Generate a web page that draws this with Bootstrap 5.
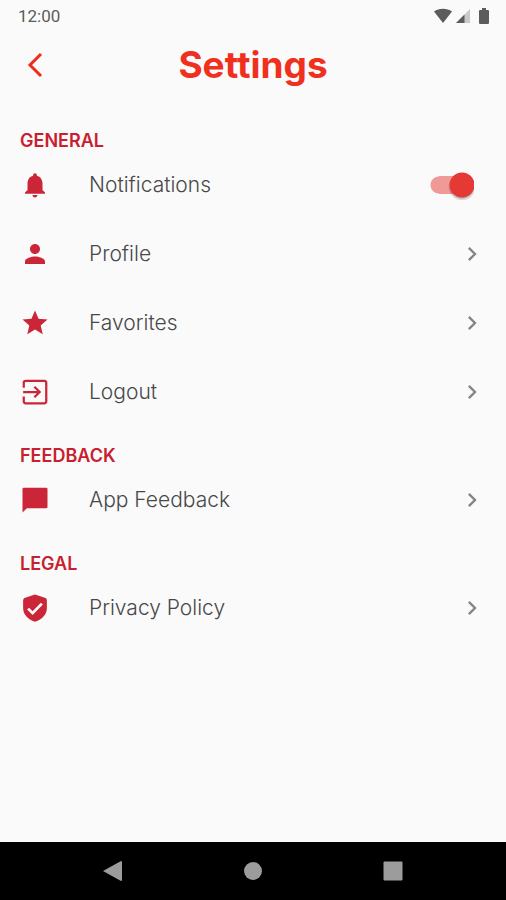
<!DOCTYPE html>
<html lang="en">
<head>
<meta charset="utf-8">
<meta name="viewport" content="width=device-width, initial-scale=1">
<title>Settings</title>
<link href="https://cdn.jsdelivr.net/npm/bootstrap@5.3.0/dist/css/bootstrap.min.css" rel="stylesheet">
<style>
  body { background: #fafafa; color: #484848; font-family: Inter, sans-serif; }
  svg { display: block; flex-shrink: 0; }
  .status-bar { height: 32px; padding: 0 16px 0 18px; color: #5c5c5c; font: 400 17px/32px Roboto, sans-serif; }
  .app-bar { height: 66px; margin-bottom: 13px; padding: 0 20px; }
  .app-bar-side { width: 30px; }
  .app-title { color: #f0301f; font-size: 37px; line-height: 44px; font-weight: 700; }
  .section-title { padding: 21px 20px 0; color: #c8202f; font-size: 18px; line-height: 18px; font-weight: 600; }
  .setting { height: 69px; padding: 0 20px; color: #484848; font-size: 21px; line-height: 28px; font-weight: 300; }
  .setting-icon { width: 30px; margin-right: 39px; color: #cb2638; }
  .setting-toggle { width: 44px; height: 30px; margin: 0 12px 0 0; appearance: none; cursor: pointer;
    background: radial-gradient(circle at 32px 15px, #e53935 12px, transparent 13px),
                radial-gradient(circle at 32px 17px, #0004 11px, transparent 14px),
                linear-gradient(#f09a98, #f09a98) 9px 6px / 24px 18px no-repeat,
                radial-gradient(circle at 9px 15px, #f09a98 8px, transparent 9px); }
  .setting-toggle:not(:checked) { transform: scaleX(-1); filter: grayscale(1); }
  .system-nav { height: 58px; padding: 0 43px; background: #000; color: #9c9c9c; }
</style>
</head>
<body>
<div class="d-flex flex-column min-vh-100">
  <div class="status-bar d-flex align-items-center justify-content-between">
    <span>12:00</span>
    <div class="d-flex align-items-center gap-1">
      <svg width="18" height="16" viewBox="0 0 18 16" fill="currentColor"><path d="M0 3.500C5-.2 13-.2 18 3.500L9 15z"/></svg>
      <svg width="14" height="16" viewBox="0 0 14 16"><path d="M14 1v14H0z" fill="#c9c9c9"/><path d="M8.500 6.500V15H0z" fill="#5c5c5c"/></svg>
      <svg class="ms-1" width="12" height="16" viewBox="0 0 12 16" fill="currentColor"><path d="M4 0h4v2h2q1 0 1 1v12q0 1-1 1H2q-1 0-1-1V3q0-1 1-1h2z"/></svg>
    </div>
  </div>

  <header class="app-bar d-flex align-items-center justify-content-between">
    <button type="button" class="app-bar-side btn p-0 border-0" aria-label="Back">
      <svg width="30" height="30" viewBox="0 0 30 30" fill="none" stroke="#ee2c1c" stroke-width="3"><path d="M21 4 10 15l11 11"/></svg>
    </button>
    <h1 class="app-title mb-0">Settings</h1>
    <span class="app-bar-side"></span>
  </header>

  <main class="flex-grow-1">
    <section>
      <h2 class="section-title mb-0">GENERAL</h2>
      <div class="setting d-flex align-items-center">
        <span class="setting-icon"><svg width="30" height="30" viewBox="0 0 24 24" fill="currentColor"><path d="M12 22c1.100 0 2-.9 2-2h-4c0 1.100.9 2 2 2zm6-6v-5c0-3.070-1.640-5.640-4.500-6.320V4c0-.83-.67-1.500-1.500-1.500s-1.500.67-1.500 1.500v.68C7.630 5.360 6 7.920 6 11v5l-2 2v1h16v-1l-2-2z"/></svg></span>
        <label class="flex-grow-1" for="notifications">Notifications</label>
        <input class="setting-toggle" type="checkbox" role="switch" id="notifications" checked>
      </div>
      <a href="#profile" class="setting d-flex align-items-center text-decoration-none">
        <span class="setting-icon"><svg width="30" height="30" viewBox="0 0 24 24" fill="currentColor"><path d="M12 12c2.210 0 4-1.790 4-4s-1.790-4-4-4-4 1.790-4 4 1.790 4 4 4zm0 2c-2.670 0-8 1.340-8 4v2h16v-2c0-2.660-5.330-4-8-4z"/></svg></span>
        <span class="flex-grow-1">Profile</span>
        <svg width="28" height="28" viewBox="0 0 24 24" fill="#858585"><path d="M8.590 16.590 13.170 12 8.590 7.410 10 6l6 6-6 6z"/></svg>
      </a>
      <a href="#favorites" class="setting d-flex align-items-center text-decoration-none">
        <span class="setting-icon"><svg width="30" height="30" viewBox="0 0 24 24" fill="currentColor"><path d="M12 17.270 18.180 21l-1.640-7.030L22 9.240l-7.190-.61L12 2 9.190 8.630 2 9.240l5.460 4.730L5.820 21z"/></svg></span>
        <span class="flex-grow-1">Favorites</span>
        <svg width="28" height="28" viewBox="0 0 24 24" fill="#858585"><path d="M8.590 16.590 13.170 12 8.590 7.410 10 6l6 6-6 6z"/></svg>
      </a>
      <a href="#logout" class="setting d-flex align-items-center text-decoration-none">
        <span class="setting-icon"><svg width="30" height="30" viewBox="0 0 24 24" fill="none" stroke="currentColor" stroke-width="1.800"><path d="M3 8.500V4.600Q3 3 4.600 3h14.800Q21 3 21 4.600v14.800q0 1.600-1.600 1.600H4.600Q3 21 3 19.400v-3.900M2.500 12h13M11.500 7.800l4.200 4.200-4.200 4.200"/></svg></span>
        <span class="flex-grow-1">Logout</span>
        <svg width="28" height="28" viewBox="0 0 24 24" fill="#858585"><path d="M8.590 16.590 13.170 12 8.590 7.410 10 6l6 6-6 6z"/></svg>
      </a>
    </section>
    <section>
      <h2 class="section-title mb-0">FEEDBACK</h2>
      <a href="#feedback" class="setting d-flex align-items-center text-decoration-none">
        <span class="setting-icon"><svg width="30" height="30" viewBox="0 0 24 24" fill="currentColor"><path d="M21 2.200H3q-1 0-1 1V22l3.500-3.500H21q1 0 1-1V3.200q0-1-1-1z"/></svg></span>
        <span class="flex-grow-1">App Feedback</span>
        <svg width="28" height="28" viewBox="0 0 24 24" fill="#858585"><path d="M8.590 16.590 13.170 12 8.590 7.410 10 6l6 6-6 6z"/></svg>
      </a>
    </section>
    <section>
      <h2 class="section-title mb-0">LEGAL</h2>
      <a href="#privacy" class="setting d-flex align-items-center text-decoration-none">
        <span class="setting-icon"><svg width="30" height="30" viewBox="0 0 24 24"><path fill="currentColor" d="M12 1.200 20.500 4Q21.500 4.500 21.500 6v6c0 5-3.500 9-9.500 11-6-2-9.500-6-9.500-11V6q0-1.500 1-2z"/><path fill="none" stroke="#fafafa" stroke-width="2.200" d="m6.500 12.500 3.600 3.600 7.400-7.600"/></svg></span>
        <span class="flex-grow-1">Privacy Policy</span>
        <svg width="28" height="28" viewBox="0 0 24 24" fill="#858585"><path d="M8.590 16.590 13.170 12 8.590 7.410 10 6l6 6-6 6z"/></svg>
      </a>
    </section>
  </main>

  <nav class="system-nav d-flex" aria-label="System">
    <button type="button" class="btn flex-fill w-100 p-0 border-0 d-flex align-items-center justify-content-center" aria-label="Back"><svg width="20" height="22" viewBox="0 0 20 22" fill="#9c9c9c"><path d="M0 11 18 1q1 0 1 1v18q0 1-1 1z"/></svg></button>
    <button type="button" class="btn flex-fill w-100 p-0 border-0 d-flex align-items-center justify-content-center" aria-label="Home"><svg width="20" height="20" viewBox="0 0 20 20" fill="#9c9c9c"><circle cx="10" cy="10" r="9"/></svg></button>
    <button type="button" class="btn flex-fill w-100 p-0 border-0 d-flex align-items-center justify-content-center" aria-label="Recent apps"><svg width="20" height="20" viewBox="0 0 20 20" fill="#9c9c9c"><rect x=".5" y=".5" width="19" height="19" rx="1"/></svg></button>
  </nav>
</div>
<script src="https://cdn.jsdelivr.net/npm/bootstrap@5.3.0/dist/js/bootstrap.bundle.min.js"></script>
</body>
</html>
